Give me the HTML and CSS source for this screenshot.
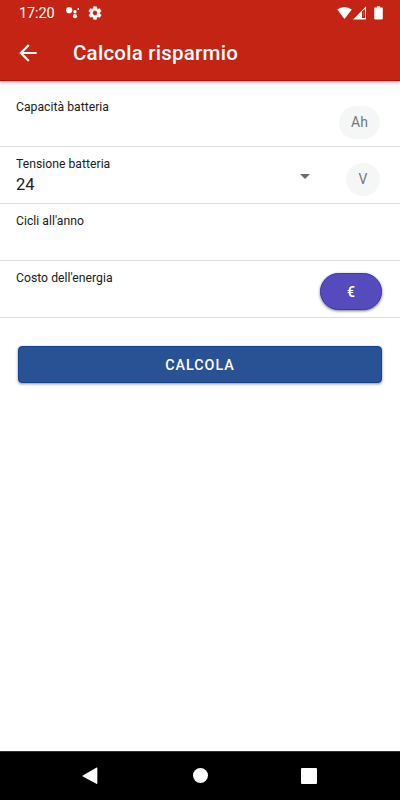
FILE: index.html
```html
<!DOCTYPE html>
<html lang="it">
<head>
<meta charset="utf-8">
<title>Calcola risparmio</title>
<link rel="stylesheet" href="styles.css">
</head>
<body>
<header class="header">
  <div class="status">
    <span class="clock">17:20</span>
    <svg class="assistant" width="14" height="12" viewBox="0 0 14 12" fill="#fff"><circle cx="3.2" cy="3.2" r="3.1"/><circle cx="9" cy="4.7" r="1.7"/><circle cx="12.3" cy="2" r=".9"/><circle cx="9" cy="9.2" r="2.1"/></svg>
    <svg class="gear" width="16" height="16" viewBox="0 0 24 24" fill="#fff"><path d="M19.14 12.94c.04-.3.06-.61.06-.94s-.02-.64-.07-.94l2.03-1.58a.49.49 0 0 0 .12-.61l-1.92-3.32a.49.49 0 0 0-.59-.22l-2.39.96a7 7 0 0 0-1.62-.94l-.36-2.54a.48.48 0 0 0-.48-.41h-3.84a.47.47 0 0 0-.47.41l-.36 2.54c-.59.24-1.13.57-1.62.94l-2.39-.96a.47.47 0 0 0-.59.22L2.74 8.87a.47.47 0 0 0 .12.61l2.03 1.58a6 6 0 0 0 0 1.88l-2.03 1.58a.49.49 0 0 0-.12.61l1.92 3.32c.12.22.37.29.59.22l2.39-.96c.5.38 1.03.7 1.62.94l.36 2.54c.05.24.24.41.48.41h3.84c.24 0 .44-.17.47-.41l.36-2.54c.59-.24 1.13-.56 1.62-.94l2.39.96c.22.08.47 0 .59-.22l1.92-3.32a.47.47 0 0 0-.12-.61zM12 15.6a3.6 3.6 0 1 1 0-7.2 3.6 3.6 0 0 1 0 7.2z" stroke="#fff" stroke-width=".5"/></svg>
    <svg class="system" width="46" height="14" viewBox="0 0 46 14"><path fill="#fff" d="M.2 3.600Q7.500-1.800 14.800 3.600L7.500 13z"/><path fill="#fff" d="M29 .5V13.500H16z"/><path fill="#c42414" d="M25 5.500l3-2.500v9h-3z"/><path fill="#fff" d="M26 6h1v5h-1z" opacity=".2"/><path fill="#fff" d="M37.900 1.400h2V.2h3.200v1.200h2q.7 0 .7.7V12.600q0 .8-.7.8h-7.200q-.7 0-.7-.8V2.100q0-.7.7-.7z"/></svg>
  </div>
  <div class="toolbar">
    <svg class="back" width="26" height="26" viewBox="0 0 24 24" fill="#fff"><path d="M20 11H7.830l5.590-5.590L12 4l-8 8 8 8 1.410-1.410L7.830 13H20z"/></svg>
    <h1>Calcola risparmio</h1>
  </div>
</header>
<main>
  <section class="row">
    <label>Capacità batteria</label>
    <span class="chip chip-ah">Ah</span>
  </section>
  <section class="row">
    <div class="field"><label>Tensione batteria</label><div class="value">24</div></div>
    <i class="caret"></i>
    <span class="chip chip-v">V</span>
  </section>
  <section class="row"><label>Cicli all'anno</label></section>
  <section class="row">
    <label>Costo dell'energia</label>
    <button class="currency">€</button>
  </section>
  <button class="submit">CALCOLA</button>
</main>
<nav class="nav">
  <svg width="16" height="18" viewBox="0 0 16 18" fill="#fff"><path d="M14.200.7Q15.300.2 15.300 1.200V16.300q0 1-1 .5L.8 9.500Q0 9 .8 8.500z"/></svg>
  <i class="home"></i>
  <i class="recent"></i>
</nav>
</body>
</html>
```
FILE: styles.css
```css
* { box-sizing: border-box; }
body {
  margin: 0;
  height: 800px;
  display: flex;
  flex-direction: column;
  overflow: hidden;
  background: #fff;
  font-family: Roboto, "Liberation Sans", sans-serif;
  color: #202020;
}
svg { display: block; flex: none; }
button { border: 0; padding: 0; font-family: inherit; }
.header {
  height: 81px;
  flex: none;
  background: #c42414;
  color: #fff;
  border-bottom: 1px solid #c4050a;
  box-shadow: 0 1px 4px rgba(0, 0, 0, .35);
}
.status {
  height: 25px;
  display: flex;
  align-items: center;
  padding: 0 17px 0 19px;
}
.clock { width: 47px; padding-top: 1px; font-size: 14.5px; line-height: 25px; letter-spacing: -.1px; }
.assistant { margin-top: 1px; }
.gear { margin-left: 7px; }
.system { margin-left: auto; }
.toolbar { height: 55px; display: flex; align-items: center; }
.back { margin-left: 15px; }
h1 { margin: 0 0 0 32px; font-size: 20.5px; line-height: 28px; font-weight: 500; letter-spacing: .24px; }
main { flex: 1; padding-top: 9px; }
.row {
  height: 57px;
  display: flex;
  border-bottom: 1px solid #dedede;
  padding: 9px 20px 0 16px;
}
label { display: block; font-size: 12.2px; line-height: 16px; letter-spacing: .02px; }
.field { width: 284px; }
.value { font-size: 16.5px; line-height: 22px; margin-top: 2px; }
.caret {
  width: 10px;
  height: 5px;
  margin-top: 18px;
  background: #6d6d6d;
  clip-path: polygon(0 0, 100% 0, 50% 100%);
}
.chip {
  height: 33px;
  margin: 7px 0 0 auto;
  border-radius: 17px;
  background: #f5f7f7;
  color: #74777d;
  font-size: 14px;
  line-height: 33px;
  text-align: center;
}
.chip-ah { width: 41px; }
.chip-v { width: 34px; }
.currency {
  width: 62px;
  height: 37px;
  margin: 3px -2px 0 auto;
  border-radius: 19px;
  background: #564bbd;
  border: 1px solid #3f35b7;
  color: #fff;
  font-size: 14px;
  font-weight: 500;
  box-shadow: 0 1px 3px rgba(0, 0, 0, .55);
}
.submit {
  display: block;
  width: 364px;
  height: 37px;
  margin: 28px 0 0 18px;
  border-radius: 4px;
  border: 1px solid #114291;
  background: #295294;
  color: #fff;
  font-size: 14.3px;
  font-weight: 500;
  letter-spacing: 1px;
  box-shadow: 0 1px 3px rgba(0, 0, 0, .45);
}
.nav {
  height: 49px;
  flex: none;
  background: #000;
  border-top: 1px solid #333;
  display: flex;
  align-items: center;
  justify-content: space-between;
  padding: 0 83px 1px 82px;
}
.home { width: 15px; height: 15px; margin-left: 1px; border-radius: 50%; background: #fff; }
.recent { width: 16px; height: 16px; border-radius: 1px; background: #fff; }
```
